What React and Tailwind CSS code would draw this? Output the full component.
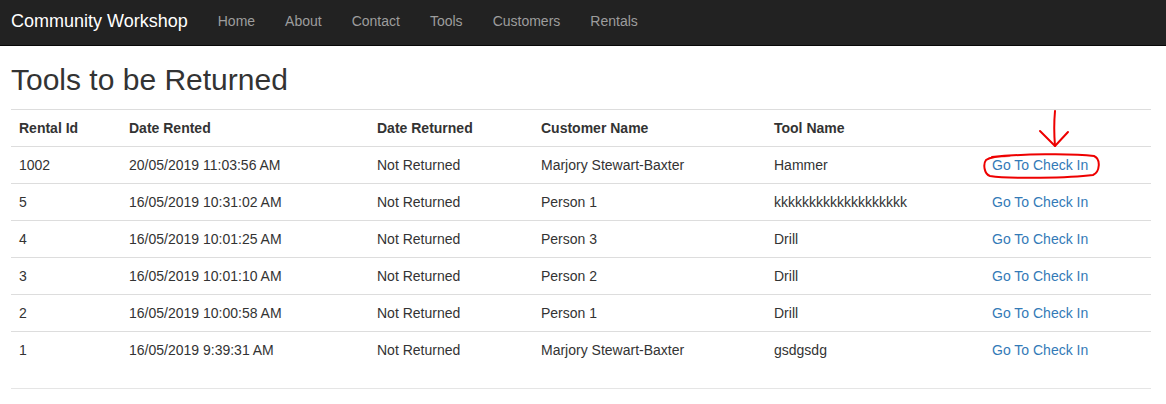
import React from "react"

const navLinks = ["Home", "About", "Contact", "Tools", "Customers", "Rentals"]

const rentals = [
  { id: "1002", rented: "20/05/2019 11:03:56 AM", customer: "Marjory Stewart-Baxter", tool: "Hammer" },
  { id: "5", rented: "16/05/2019 10:31:02 AM", customer: "Person 1", tool: "kkkkkkkkkkkkkkkkkkk" },
  { id: "4", rented: "16/05/2019 10:01:25 AM", customer: "Person 3", tool: "Drill" },
  { id: "3", rented: "16/05/2019 10:01:10 AM", customer: "Person 2", tool: "Drill" },
  { id: "2", rented: "16/05/2019 10:00:58 AM", customer: "Person 1", tool: "Drill" },
  { id: "1", rented: "16/05/2019 9:39:31 AM", customer: "Marjory Stewart-Baxter", tool: "gsdgsdg" },
]

const cols = "grid grid-cols-[110px_248px_164px_233px_218px_167px] border-t border-[#dddddd]"

function App() {
  return (
    <div className="relative min-h-[404px] bg-white text-[14px] text-[#333333] font-['Liberation_Sans',Arial,sans-serif]">
      <nav className="h-[46px] bg-[#222222] border-b border-[#080808] flex items-start pt-[11px] px-[11px]">
        <a className="text-white text-[18px] pr-[15px] leading-[20px]">Community Workshop</a>
        <ul className="flex">
          {navLinks.map((link) => (
            <li key={link} className="px-[15px] text-[#9d9d9d] leading-[20px]">
              {link}
            </li>
          ))}
        </ul>
      </nav>

      <main className="px-[11px] pt-[17px]">
        <h1 className="text-[30px] leading-[33px] font-medium mb-[13px]">Tools to be Returned</h1>
        <div className="w-[1140px]">
          <div className={cols + " font-bold"}>
            <div className="p-2 leading-5">Rental Id</div>
            <div className="p-2 leading-5">Date Rented</div>
            <div className="p-2 leading-5">Date Returned</div>
            <div className="p-2 leading-5">Customer Name</div>
            <div className="p-2 leading-5">Tool Name</div>
            <div className="p-2 leading-5"></div>
          </div>
          {rentals.map((r) => (
            <div key={r.id} className={cols}>
              <div className="p-2 leading-5">{r.id}</div>
              <div className="p-2 leading-5">{r.rented}</div>
              <div className="p-2 leading-5">Not Returned</div>
              <div className="p-2 leading-5">{r.customer}</div>
              <div className="p-2 leading-5">{r.tool}</div>
              <div className="p-2 leading-5">
                <a className="text-[#337ab7]">Go To Check In</a>
              </div>
            </div>
          ))}
        </div>
        <hr className="mt-[20px] w-[1140px] border-t border-[#e5e5e5]" />
      </main>

      {/* hand-drawn red markup over the first link */}
      <svg className="absolute left-0 top-0 pointer-events-none" width="1166" height="404" fill="none">
        <g stroke="#ee0000" strokeWidth="2" strokeLinecap="round" strokeLinejoin="round">
          <path d="M1055 111 C1054 122 1054 134 1055 146" />
          <path d="M1040 131 L1055 146 L1068 132" />
          <path d="M992 157 C1020 154 1072 153 1094 156 C1101 159 1100 172 1093 175 C1070 178 1010 179 990 176 C984 174 983 164 986 160 C990 157 1000 156 1010 156" />
        </g>
      </svg>
    </div>
  )
}

export default App
